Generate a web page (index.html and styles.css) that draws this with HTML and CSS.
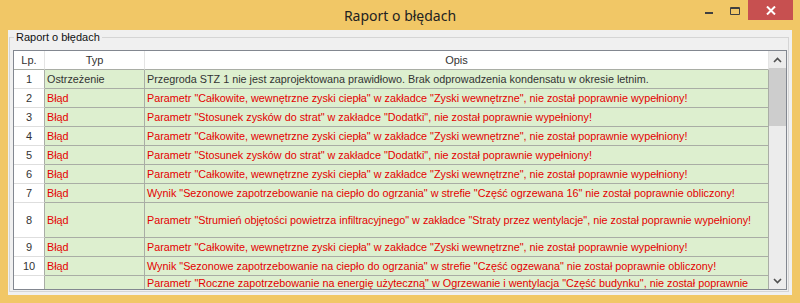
FILE: index.html
```html
<!DOCTYPE html>
<html lang="pl">
<head>
  <meta charset="UTF-8">
  <title>Raport o błędach</title>
  <link rel="stylesheet" href="styles.css">
</head>
<body>
  <div class="window">
    <!-- pasek tytułu -->
    <div class="titlebar">
      <span class="title">Raport o błędach</span>
      <div class="controls">
        <span class="ctl ctl-min"><svg width="8" height="2" viewBox="0 0 8 2"><rect width="8" height="2" fill="#404040"/></svg></span>
        <span class="ctl ctl-max"><svg width="10" height="8" viewBox="0 0 10 8"><path d="M0.5 0.5h9v7h-9z M0.5 1.5h9" fill="none" stroke="#404040"/></svg></span>
        <span class="ctl ctl-close"><svg width="10" height="9" viewBox="0 0 10 9"><path d="M1 0.5l8 8M9 0.5l-8 8" stroke="#fff" stroke-width="2"/></svg></span>
      </div>
    </div>

    <div class="client">
      <fieldset class="group">
        <legend>Raport o błędach</legend>
        <div class="grid">
          <div class="rows">
            <div class="row head">
              <div class="c lp">Lp.</div>
              <div class="c typ">Typ</div>
              <div class="c opis">Opis</div>
            </div>
            <div class="row warn">
              <div class="c lp">1</div>
              <div class="c typ">Ostrzeżenie</div>
              <div class="c opis">Przegroda STZ 1 nie jest zaprojektowana prawidłowo. Brak odprowadzenia kondensatu w okresie letnim.</div>
            </div>
            <div class="row err">
              <div class="c lp">2</div>
              <div class="c typ">Błąd</div>
              <div class="c opis">Parametr "Całkowite, wewnętrzne zyski ciepła" w zakładce "Zyski wewnętrzne", nie został poprawnie wypełniony!</div>
            </div>
            <div class="row err">
              <div class="c lp">3</div>
              <div class="c typ">Błąd</div>
              <div class="c opis">Parametr "Stosunek zysków do strat" w zakładce "Dodatki", nie został poprawnie wypełniony!</div>
            </div>
            <div class="row err">
              <div class="c lp">4</div>
              <div class="c typ">Błąd</div>
              <div class="c opis">Parametr "Całkowite, wewnętrzne zyski ciepła" w zakładce "Zyski wewnętrzne", nie został poprawnie wypełniony!</div>
            </div>
            <div class="row err">
              <div class="c lp">5</div>
              <div class="c typ">Błąd</div>
              <div class="c opis">Parametr "Stosunek zysków do strat" w zakładce "Dodatki", nie został poprawnie wypełniony!</div>
            </div>
            <div class="row err">
              <div class="c lp">6</div>
              <div class="c typ">Błąd</div>
              <div class="c opis">Parametr "Całkowite, wewnętrzne zyski ciepła" w zakładce "Zyski wewnętrzne", nie został poprawnie wypełniony!</div>
            </div>
            <div class="row err">
              <div class="c lp">7</div>
              <div class="c typ">Błąd</div>
              <div class="c opis">Wynik "Sezonowe zapotrzebowanie na ciepło do ogrzania" w strefie "Część ogrzewana 16" nie został poprawnie obliczony!</div>
            </div>
            <div class="row err tall">
              <div class="c lp">8</div>
              <div class="c typ">Błąd</div>
              <div class="c opis">Parametr "Strumień objętości powietrza infiltracyjnego" w zakładce "Straty przez wentylacje", nie został poprawnie wypełniony!</div>
            </div>
            <div class="row err">
              <div class="c lp">9</div>
              <div class="c typ">Błąd</div>
              <div class="c opis">Parametr "Całkowite, wewnętrzne zyski ciepła" w zakładce "Zyski wewnętrzne", nie został poprawnie wypełniony!</div>
            </div>
            <div class="row err">
              <div class="c lp">10</div>
              <div class="c typ">Błąd</div>
              <div class="c opis">Wynik "Sezonowe zapotrzebowanie na ciepło do ogrzania" w strefie "Część ogzewana" nie został poprawnie obliczony!</div>
            </div>
            <div class="row err tall wrap">
              <div class="c lp">11</div>
              <div class="c typ">Błąd</div>
              <div class="c opis">Parametr "Roczne zapotrzebowanie na energię użyteczną" w Ogrzewanie i wentylacja "Część budynku", nie został poprawnie<br>wypełniony!</div>
            </div>
          </div>

          <div class="scrollbar">
            <span class="sb-btn"><svg width="9" height="6" viewBox="0 0 9 6"><path d="M1 5l3.5-3.5L8 5" fill="none" stroke="#505050" stroke-width="1.6"/></svg></span>
            <span class="sb-thumb"></span>
            <span class="sb-track"></span>
            <span class="sb-btn"><svg width="9" height="6" viewBox="0 0 9 6"><path d="M1 1l3.5 3.5L8 1" fill="none" stroke="#505050" stroke-width="1.6"/></svg></span>
          </div>
        </div>
      </fieldset>
    </div>
  </div>
</body>
</html>
```

FILE: styles.css
```css
body {
  margin: 0;
  font-family: "Liberation Sans", Arial, sans-serif;
  font-size: 10.8px;
  color: #1e1e1e;
}
.window {
  width: 800px;
  height: 303px;
  box-sizing: border-box;
  background: #f1c766;
  display: flex;
  flex-direction: column;
}
.titlebar {
  height: 30px;
  flex: none;
  display: grid;
  grid-template-columns: 1fr auto 1fr;
}
.title {
  grid-column: 2;
  align-self: center;
  font-family: "Noto Sans", sans-serif;
  font-size: 14px;
  color: #222;
  padding-top: 1px;
}
.controls {
  grid-column: 3;
  justify-self: end;
  display: flex;
  margin-right: 7px;
  height: 20px;
}
.ctl {
  display: flex;
  align-items: center;
  justify-content: center;
}
.ctl-min {
  width: 26px;
  padding-top: 6px;
  box-sizing: border-box;
}
.ctl-max {
  width: 26px;
  padding-top: 2px;
  box-sizing: border-box;
}
.ctl-close {
  width: 45px;
  background: #c75050;
}
.client {
  flex: 1;
  margin: 0 8px 8px;
  background: #f0f0f0;
  display: flex;
}
.group {
  flex: 1;
  margin: 1px 3px 3px 1px;
  padding: 6px 1px 1px 3px;
  border: 1px solid #d5d5d5;
  min-width: 0;
}
.group legend {
  font-size: 11px;
  line-height: 13px;
  padding: 0 2px;
  margin-left: 1px;
  color: #111;
}
.grid {
  height: 240px;
  box-sizing: border-box;
  border: 1px solid #828790;
  background: #fff;
  display: flex;
}
.rows {
  width: 755px;
  overflow: hidden;
}
.row {
  display: grid;
  grid-template-columns: 31px 100px 624px;
  height: 19px;
}
.row.tall {
  height: 35px;
}
.c {
  box-sizing: border-box;
  display: flex;
  align-items: center;
  padding: 0 2px;
  white-space: nowrap;
  overflow: hidden;
  border-bottom: 1px solid #a9ada5;
  border-right: 1px solid #a9ada5;
  background: #ddefcf;
}
.c.lp {
  justify-content: center;
  background: #fff;
  border-bottom-color: #dedede;
  color: #333;
  padding: 0;
  font-size: 11px;
}
.head .c {
  background: #fff;
  justify-content: center;
  color: #333;
  border-right-color: #e4e4e4;
  border-bottom-color: #a9ada5;
  font-size: 11px;
}
.head .c.lp {
  border-bottom-color: #a9ada5;
}
.warn .typ,
.warn .opis {
  color: #333;
}
.err .typ,
.err .opis {
  color: #e40000;
}
.wrap .opis {
  align-items: flex-start;
  line-height: 15px;
}
.scrollbar {
  width: 17px;
  background: #ececec;
  display: flex;
  flex-direction: column;
}
.sb-btn {
  height: 17px;
  flex: none;
  display: flex;
  align-items: center;
  justify-content: center;
}
.sb-thumb {
  height: 58px;
  background: #cdcdcd;
}
.sb-track {
  flex: 1;
}
```
